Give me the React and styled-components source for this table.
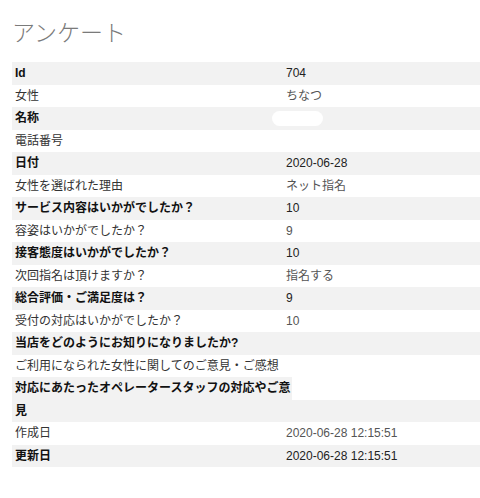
import React from 'react';
import styled, { createGlobalStyle } from 'styled-components';

const GlobalStyle = createGlobalStyle`
	body {
		margin: 0;
		background: #fff;
		font-family: 'Liberation Sans', 'Noto Sans CJK JP', sans-serif;
	}
`;

const rows = [
	{ label: 'Id', value: '704' },
	{ label: '女性', value: 'ちなつ' },
	{ label: '名称', value: '', hidden: true },
	{ label: '電話番号', value: '' },
	{ label: '日付', value: '2020-06-28' },
	{ label: '女性を選ばれた理由', value: 'ネット指名' },
	{ label: 'サービス内容はいかがでしたか？', value: '10' },
	{ label: '容姿はいかがでしたか？', value: '9' },
	{ label: '接客態度はいかがでしたか？', value: '10' },
	{ label: '次回指名は頂けますか？', value: '指名する' },
	{ label: '総合評価・ご満足度は？', value: '9' },
	{ label: '受付の対応はいかがでしたか？', value: '10' },
	{ label: '当店をどのようにお知りになりましたか?', value: '' },
	{ label: 'ご利用になられた女性に関してのご意見・ご感想', value: '' },
	{ label: '対応にあたったオペレータースタッフの対応やご意見', value: '' },
	{ label: '作成日', value: '2020-06-28 12:15:51' },
	{ label: '更新日', value: '2020-06-28 12:15:51' },
];

const App = () => (
	<Page>
		<GlobalStyle />
		<Title>アンケート</Title>
		<List>
			{rows.map((row, i) => (
				<Row key={row.label}>
					<Label striped={i % 2 === 0}>{row.label}</Label>
					<Value striped={i % 2 === 0}>
						{row.value || '\u00a0'}
						{row.hidden && <Mask />}
					</Value>
				</Row>
			))}
		</List>
	</Page>
);

export default App;

const Page = styled.div`
	padding: 0 0 0 12px;
`;

const Title = styled.h1`
	margin: 0;
	padding: 16px 0 16px;
	font-family: 'Noto Sans CJK JP', sans-serif;
	font-size: 23px;
	font-weight: 300;
	line-height: 30px;
	color: #7a7a7a;
`;

const List = styled.div`
	display: flex;
	flex-direction: column;
	font-size: 12px;
	line-height: 22.5px;
`;

const Row = styled.div`
	display: flex;
	align-items: flex-end;
`;

const Label = styled.div`
	position: relative;
	flex: 0 0 280px;
	box-sizing: border-box;
	padding-left: 3px;
	background: ${props => (props.striped ? '#f2f2f2' : '#fff')};
	font-weight: ${props => (props.striped ? 'bold' : 'normal')};
	color: ${props => (props.striped ? '#111' : '#333')};
`;

const Value = styled.div`
	position: relative;
	flex: 1;
	margin-left: -6px;
	background: ${props => (props.striped ? '#f2f2f2' : '#fff')};
	color: ${props => (props.striped ? '#222' : '#555')};
	white-space: nowrap;
`;

const Mask = styled.span`
	position: absolute;
	left: -14px;
	top: 4px;
	width: 51px;
	height: 15px;
	border-radius: 8px;
	background: #fff;
`;
